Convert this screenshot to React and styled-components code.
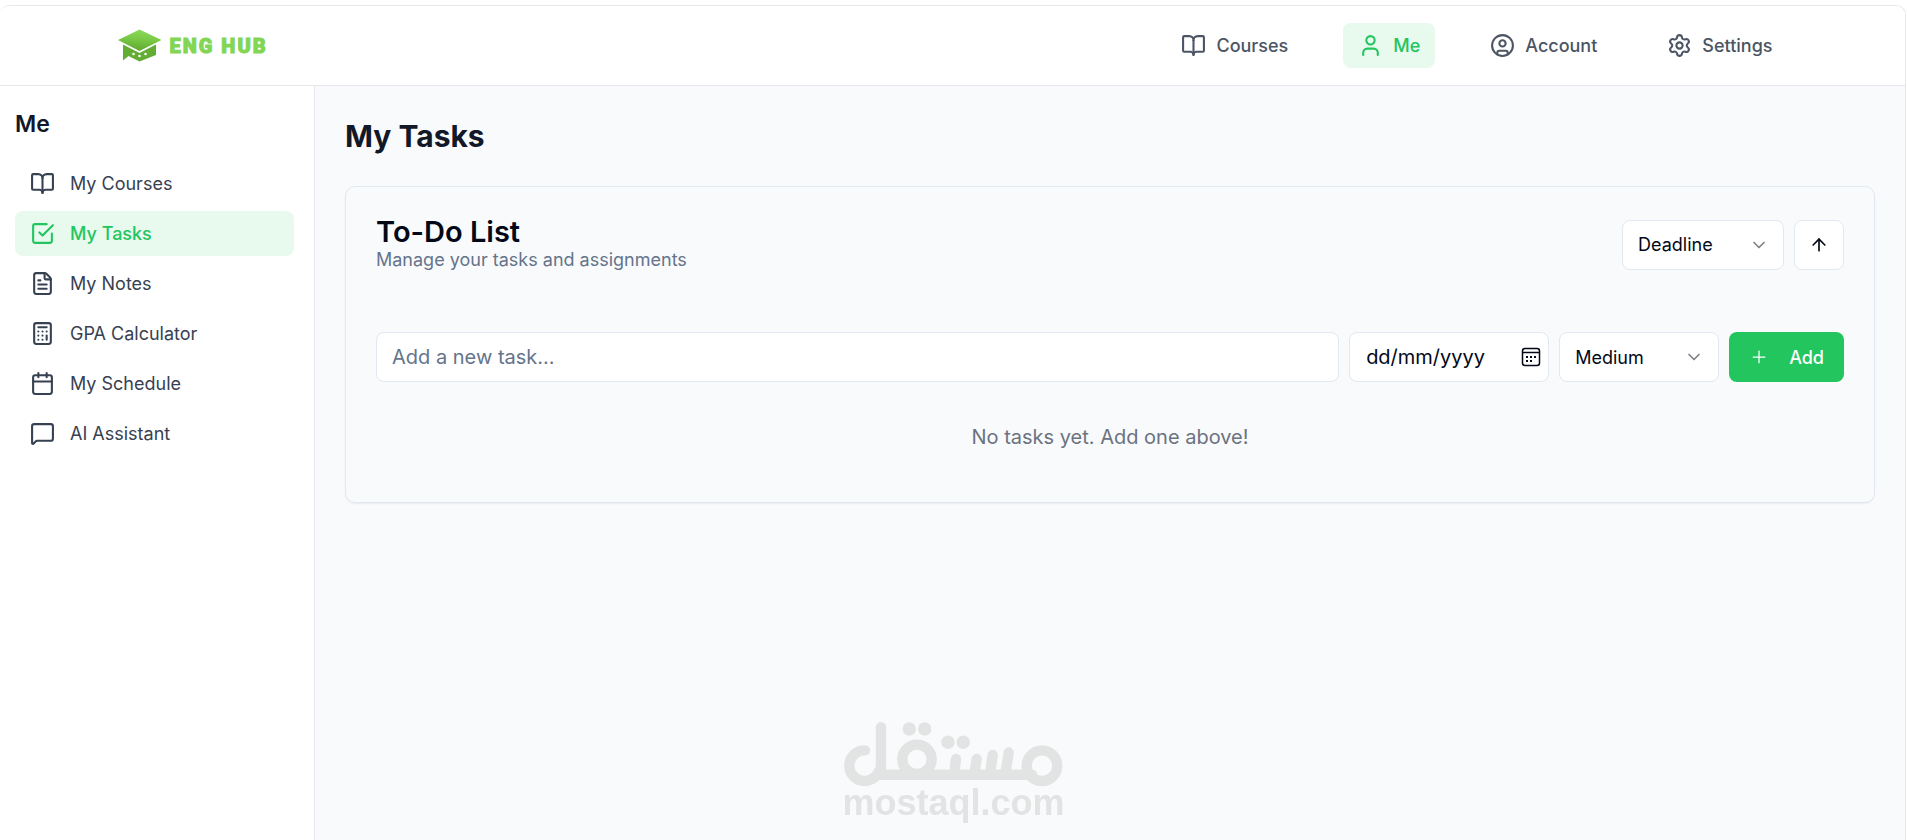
import React, { useState } from "react";
import styled, { createGlobalStyle, css } from "styled-components";
import {
  BookOpen,
  User,
  CircleUser,
  Settings,
  FileText,
  Calculator,
  Calendar,
  MessageSquare,
  ChevronDown,
  ArrowUp,
  Plus,
} from "lucide-react";

const GlobalStyle = createGlobalStyle`
  *, *::before, *::after { box-sizing: border-box; }
  body {
    margin: 0;
    background: #ffffff;
    color: #020817;
    font-family: Inter, "Liberation Sans", sans-serif;
    font-size: 20px;
    line-height: 30px;
  }
  h1, h2, p { margin: 0; }
  button, input, select { font-family: inherit; }
`;

const Frame = styled.div`
  display: flex;
  flex-direction: column;
  min-height: calc(100vh - 5px);
  margin: 5px 1px 0 0;
  border: 1px solid #e5e7eb;
  border-width: 1px 1px 0 0;
  border-radius: 10px 10px 0 0;
  overflow: hidden;
`;

const Header = styled.header`
  border-bottom: 1px solid #e5e7eb;
  background: #ffffff;
`;

const HeaderInner = styled.div`
  display: flex;
  align-items: center;
  justify-content: space-between;
  max-width: 1750px;
  height: 79px;
  margin: 0 auto;
  padding: 0 40px;
`;

const Brand = styled.a`
  display: flex;
  align-items: center;
  gap: 8px;
  color: #82d653;
  text-decoration: none;
  font-family: Roboto, sans-serif;
  font-weight: 900;
  font-size: 20px;
  letter-spacing: 2px;
  -webkit-text-stroke: 1px currentColor;
`;

const TopNav = styled.nav`
  display: flex;
  gap: 40px;
`;

const activeLink = css`
  background: #e8f9ee;
  color: #22c55e;
  font-weight: 500;
`;

const TopLink = styled.a`
  display: flex;
  align-items: center;
  gap: 10px;
  height: 45px;
  padding: 0 15px;
  border-radius: 8px;
  color: #4b5563;
  font-size: 18px;
  font-weight: 500;
  text-decoration: none;
  ${(p) => p.$active && activeLink}
`;

const Body = styled.div`
  display: flex;
  flex: 1;
`;

const Sidebar = styled.aside`
  flex: none;
  width: 315px;
  padding: 21px 20px 20px 15px;
  border-right: 1px solid #e5e7eb;
  background: #ffffff;
`;

const SidebarTitle = styled.h2`
  margin-bottom: 19px;
  color: #111827;
  font-size: 23px;
  font-weight: 600;
  line-height: 35px;
`;

const SideNav = styled.nav`
  display: flex;
  flex-direction: column;
  gap: 5px;
`;

const SideLink = styled.a`
  display: flex;
  align-items: center;
  gap: 15px;
  height: 45px;
  padding: 0 15px;
  border-radius: 8px;
  color: #374151;
  font-size: 18px;
  text-decoration: none;
  ${(p) => p.$active && activeLink}
`;

const Main = styled.main`
  flex: 1;
  min-width: 0;
  padding: 30px;
  background: #f9fafc;
`;

const PageTitle = styled.h1`
  margin-bottom: 30px;
  color: #111827;
  font-size: 30px;
  font-weight: 700;
  line-height: 40px;
`;

const Card = styled.section`
  padding: 30px;
  border: 1px solid #e2e8f0;
  border-radius: 10px;
  box-shadow: 0 1px 2px rgba(0, 0, 0, 0.06);
`;

const CardHeader = styled.div`
  display: flex;
  align-items: center;
  justify-content: space-between;
  margin-bottom: 60px;
`;

const CardTitle = styled.h2`
  font-size: 29px;
  font-weight: 600;
  line-height: 30px;
`;

const CardText = styled.p`
  color: #64748b;
  font-size: 18px;
  line-height: 25px;
`;

const Controls = styled.div`
  display: flex;
  gap: 10px;
`;

const TaskForm = styled.form`
  display: flex;
  gap: 10px;
`;

const field = css`
  height: 50px;
  border: 1px solid #e2e8f0;
  border-radius: 8px;
  background: #ffffff;
  color: #020817;
`;

const TaskInput = styled.input`
  ${field}
  flex: 1;
  min-width: 0;
  padding: 0 15px;
  font-size: 20px;
  &::placeholder { color: #64748b; opacity: 1; }
`;

const DateField = styled.div`
  ${field}
  display: flex;
  align-items: center;
  width: 200px;
  padding: 0 7px 0 16px;
`;

const DateInput = styled.input`
  flex: 1;
  min-width: 0;
  padding: 0;
  border: 0;
  outline: 0;
  background: none;
  color: #020817;
  font-size: 20px;
  &::placeholder { color: #020817; opacity: 1; }
`;

const PickerButton = styled.button`
  display: flex;
  padding: 0;
  border: 0;
  background: none;
  color: #020817;
`;

const SelectWrap = styled.div`
  position: relative;
  width: ${(p) => p.$width};
  svg {
    position: absolute;
    top: 15px;
    right: 15px;
    color: #020817;
    opacity: 0.5;
    pointer-events: none;
  }
`;

const Select = styled.select`
  ${field}
  appearance: none;
  width: 100%;
  padding: 0 40px 0 15px;
  font-size: 18px;
`;

const IconButton = styled.button`
  ${field}
  display: flex;
  align-items: center;
  justify-content: center;
  width: 50px;
  padding: 0;
`;

const AddButton = styled.button`
  display: flex;
  align-items: center;
  gap: 20px;
  height: 50px;
  padding: 0 20px;
  border: 0;
  border-radius: 8px;
  background: #22c55e;
  color: #ffffff;
  font-size: 18px;
  font-weight: 500;
`;

const Empty = styled.p`
  padding: 40px 0 20px;
  color: #6b7280;
  text-align: center;
`;

const Watermark = styled.div`
  position: fixed;
  left: 50%;
  bottom: 21px;
  display: flex;
  flex-direction: column;
  align-items: center;
  transform: translateX(-50%);
  color: #e2e4e4;
  font-family: "Liberation Sans", Arial, sans-serif;
  font-size: 36px;
  font-weight: 700;
  line-height: 32px;
  pointer-events: none;
`;

const CapLogo = () => (
  <svg width="44" height="33" viewBox="0 0 44 33" aria-hidden="true">
    <defs>
      <linearGradient id="cap" x1="0.6" y1="0" x2="0.4" y2="1">
        <stop offset="0" stopColor="#8bdb5c" />
        <stop offset="0.45" stopColor="#79c945" />
        <stop offset="1" stopColor="#5fa82f" />
      </linearGradient>
    </defs>
    <path d="M21.5 0.5 43.5 11 21.5 22 0 11Z" fill="url(#cap)" />
    <path d="M5 15.5 21.5 24 38 15.5V26L21.5 32.5 10.5 27 5 31.5Z" fill="#63ad33" />
    <g fill="#ffffff">
      <circle cx="15.5" cy="25" r="1.3" />
      <circle cx="21.5" cy="27" r="1.3" />
      <circle cx="27.5" cy="25" r="1.3" />
    </g>
  </svg>
);

const TaskCheckIcon = () => (
  <svg width="25" height="25" viewBox="0 0 24 24" fill="none" stroke="currentColor" strokeWidth="2" strokeLinecap="round" strokeLinejoin="round" aria-hidden="true">
    <path d="m9 11 3 3L22 4" />
    <path d="M21 12v7a2 2 0 0 1-2 2H5a2 2 0 0 1-2-2V5a2 2 0 0 1 2-2h11" />
  </svg>
);

const PickerIcon = () => (
  <svg width="20" height="20" viewBox="0 0 20 20" fill="none" stroke="currentColor" strokeWidth="1.5" aria-hidden="true">
    <rect x="1.5" y="1.5" width="17" height="17" rx="2.5" />
    <path d="M1.5 5.5h17" />
    <g fill="currentColor" stroke="none">
      <rect x="5" y="9" width="2" height="2" />
      <rect x="9" y="9" width="2" height="2" />
      <rect x="13" y="9" width="2" height="2" />
      <rect x="5" y="13" width="2" height="2" />
      <rect x="9" y="13" width="2" height="2" />
    </g>
  </svg>
);

const WatermarkLogo = () => (
  <svg width="219" height="65" viewBox="0 0 219 65" fill="none" stroke="currentColor" strokeWidth="10.4" strokeLinecap="round" aria-hidden="true">
    <circle cx="198" cy="43.7" r="15.3" />
    <path d="M188 52.7H34" />
    <circle cx="73" cy="37.3" r="14.7" />
    <path d="M37 5.3V48" />
    <path d="M21 28.4A15.3 15.3 0 1 0 35 49" />
    <path d="M112 37 110.5 50M132.7 37 130.7 50M148.7 33 146.3 50M164.7 30.5 161.7 50" />
    <g fill="currentColor" stroke="none">
      <circle cx="65.3" cy="7" r="6.7" />
      <circle cx="80.7" cy="7" r="6.7" />
      <circle cx="104" cy="20.3" r="6.7" />
      <circle cx="119.3" cy="20.3" r="6.7" />
    </g>
  </svg>
);

const topLinks = [
  { label: "Courses", icon: BookOpen },
  { label: "Me", icon: User, active: true },
  { label: "Account", icon: CircleUser },
  { label: "Settings", icon: Settings },
];

const sideLinks = [
  { label: "My Courses", icon: BookOpen },
  { label: "My Tasks", icon: TaskCheckIcon, active: true },
  { label: "My Notes", icon: FileText },
  { label: "GPA Calculator", icon: Calculator },
  { label: "My Schedule", icon: Calendar },
  { label: "AI Assistant", icon: MessageSquare },
];

export default function App() {
  const [task, setTask] = useState("");
  const [date, setDate] = useState("");
  return (
    <>
      <GlobalStyle />
      <Frame>
        <Header>
          <HeaderInner>
            <Brand href="#home">
              <CapLogo />
              ENG HUB
            </Brand>
            <TopNav aria-label="Main">
              {topLinks.map(({ label, icon: Icon, active }) => (
                <TopLink key={label} href="#" $active={active}>
                  <Icon size={25} />
                  {label}
                </TopLink>
              ))}
            </TopNav>
          </HeaderInner>
        </Header>
        <Body>
          <Sidebar>
            <SidebarTitle>Me</SidebarTitle>
            <SideNav aria-label="Me">
              {sideLinks.map(({ label, icon: Icon, active }) => (
                <SideLink key={label} href="#" $active={active}>
                  <Icon size={25} />
                  {label}
                </SideLink>
              ))}
            </SideNav>
          </Sidebar>
          <Main>
            <PageTitle>My Tasks</PageTitle>
            <Card>
              <CardHeader>
                <div>
                  <CardTitle>To-Do List</CardTitle>
                  <CardText>Manage your tasks and assignments</CardText>
                </div>
                <Controls>
                  <SelectWrap $width="162px">
                    <Select aria-label="Sort by" defaultValue="Deadline">
                      <option>Deadline</option>
                      <option>Priority</option>
                    </Select>
                    <ChevronDown size={20} />
                  </SelectWrap>
                  <IconButton type="button" aria-label="Sort ascending">
                    <ArrowUp size={20} />
                  </IconButton>
                </Controls>
              </CardHeader>
              <TaskForm onSubmit={(e) => e.preventDefault()}>
                <TaskInput
                  aria-label="New task"
                  placeholder="Add a new task..."
                  value={task}
                  onChange={(e) => setTask(e.target.value)}
                />
                <DateField>
                  <DateInput
                    aria-label="Deadline"
                    placeholder="dd/mm/yyyy"
                    value={date}
                    onChange={(e) => setDate(e.target.value)}
                  />
                  <PickerButton type="button" aria-label="Pick a date">
                    <PickerIcon />
                  </PickerButton>
                </DateField>
                <SelectWrap $width="160px">
                  <Select aria-label="Priority" defaultValue="Medium">
                    <option>Low</option>
                    <option>Medium</option>
                    <option>High</option>
                  </Select>
                  <ChevronDown size={20} />
                </SelectWrap>
                <AddButton type="submit">
                  <Plus size={20} strokeWidth={1.5} />
                  Add
                </AddButton>
              </TaskForm>
              <Empty>No tasks yet. Add one above!</Empty>
            </Card>
          </Main>
        </Body>
      </Frame>
      <Watermark>
        <WatermarkLogo />
        mostaql.com
      </Watermark>
    </>
  );
}
